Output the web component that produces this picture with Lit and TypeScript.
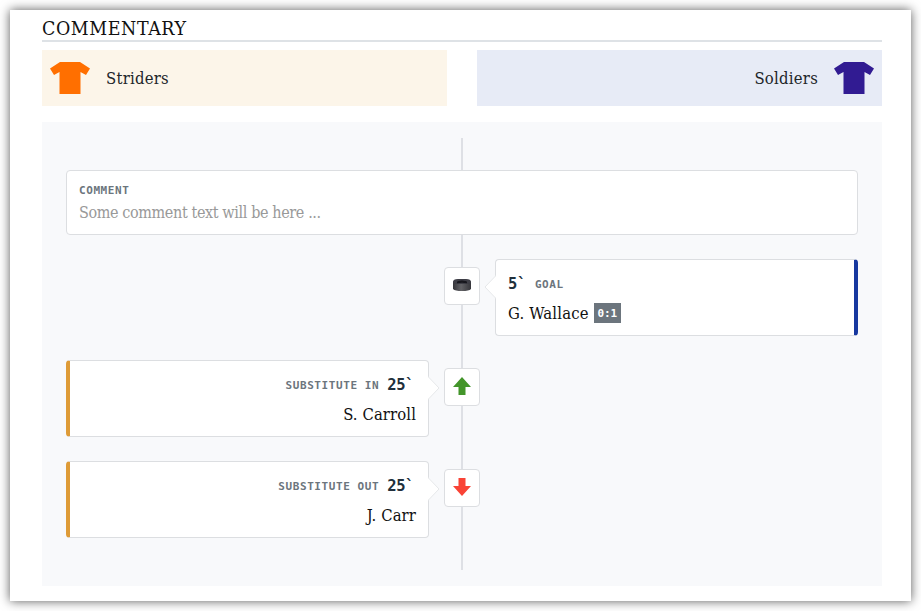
import { LitElement, html, css, svg, nothing } from "lit";
import { customElement, property } from "lit/decorators.js";

type Kind = "goal" | "in" | "out";
interface MatchEvent {
  kind: Kind;
  side: "home" | "away";
  minute: string;
  label: string;
  player: string;
  score?: string;
}

const EVENTS: MatchEvent[] = [
  { kind: "goal", side: "away", minute: "5`", label: "Goal", player: "G. Wallace", score: "0:1" },
  { kind: "in", side: "home", minute: "25`", label: "Substitute in", player: "S. Carroll" },
  { kind: "out", side: "home", minute: "25`", label: "Substitute out", player: "J. Carr" },
];

const GLYPHS = {
  goal: svg`
    <defs><linearGradient id="side" x1="0" x2="1"><stop offset="0" stop-color="#36363b"/><stop offset=".45" stop-color="#626266"/><stop offset="1" stop-color="#36363b"/></linearGradient></defs>
    <path d="M0 2.500V10Q2 12 9 12T18 10V2.500Z" fill="url(#side)"/>
    <path d="M0 3Q0 0 5 0H13Q18 0 18 3Q18 5 14 5H4Q0 5 0 3Z" fill="#3d3d45"/>
    <path d="M4 3Q4.500 1.500 9 1.500T14 3V4.200Q9 3.400 4 4.200Z" fill="#17171d"/>`,
  in: svg`<path d="M9 0L18 10H12.5V18H5.5V10H0Z" fill="#43952a"/>`,
  out: svg`<path d="M9 18L18 8H12.5V0H5.5V8H0Z" fill="#f94336"/>`,
};

@customElement("team-banner")
export class TeamBanner extends LitElement {
  @property() name = "";
  static styles = css`
    :host { display: flex; align-items: center; gap: 16px; height: 56px; padding: 0 8px; box-sizing: border-box; }
    .shirt { width: 40px; height: 32px; flex: none; fill: var(--shirt); }
    .name { font-size: 16.5px; letter-spacing: 0.25px; color: #212529; line-height: 24px; padding-top: 2px; }
  `;
  render() {
    return html`
      <svg class="shirt" viewBox="0 0 40 32"><path d="M10 0H30L40 6.500L36 13L30.500 10V32H9.500V10L4 13L0 6.500Z" /></svg>
      <span class="name">${this.name}</span>`;
  }
}

@customElement("event-row")
export class EventRow extends LitElement {
  @property({ attribute: false }) event!: MatchEvent;
  static styles = css`
    :host { display: grid; grid-template-columns: 363px 66px 363px; height: 77px; }
    .marker {
      grid-column: 2; grid-row: 1; justify-self: center; margin-top: 8px; width: 36px; height: 38px;
      box-sizing: border-box; background: #fff; border: 1px solid #dcdee1; border-radius: 4px;
      display: flex; align-items: center; justify-content: center;
    }
    .glyph { width: 18px; height: 18px; display: block; margin-bottom: 2px; }
    .glyph.goal { height: 12px; margin-bottom: 2px; }
    .card {
      position: relative; grid-row: 1; box-sizing: border-box; background: #fff;
      border: 1px solid #dcdee1; border-radius: 4px; padding: 11px 12px 0;
    }
    .home { grid-column: 1; border-left: 4px solid #de9b37; text-align: right; }
    .away { grid-column: 3; border-right: 4px solid #17389f; }
    .meta { display: flex; align-items: center; gap: 9px; height: 26px; font-family: "DejaVu Sans Mono", monospace; font-weight: 700; }
    .home .meta { flex-direction: row-reverse; gap: 8px; padding-right: 2px; }
    .minute { font-size: 15.5px; letter-spacing: -0.4px; color: #212f3b; }
    .label { font-size: 11px; letter-spacing: 0.58px; color: #6c757d; text-transform: uppercase; }
    .person { display: flex; align-items: center; gap: 5px; height: 24px; margin-top: 4px; font-size: 16.5px; letter-spacing: 0.1px; color: #111; }
    .home .person { justify-content: flex-end; }
    .away .person { letter-spacing: 0.2px; }
    .score {
      background: #6c757d; color: #fff; width: 27px; height: 20px; display: grid; place-items: center;
      font: 700 11px "DejaVu Sans Mono", monospace; letter-spacing: 0;
    }
    .tip { position: absolute; top: 15px; width: 12px; height: 24px; fill: #fff; stroke: #e6e8ea; }
    .home .tip { right: -12px; }
    .away .tip { left: -12px; }
  `;
  render() {
    const e = this.event;
    return html`
      <div class="marker">
        <svg class="glyph ${e.kind}" viewBox=${e.kind === "goal" ? "0 0 18 12" : "0 0 18 18"}>${GLYPHS[e.kind]}</svg>
      </div>
      <div class="card ${e.side}">
        <svg class="tip" viewBox="0 0 12 24"><path d=${e.side === "home" ? "M0 .5L11 12L0 23.5" : "M12 .5L1 12L12 23.5"} /></svg>
        <div class="meta"><span class="minute">${e.minute}</span><span class="label">${e.label}</span></div>
        <div class="person"><span>${e.player}</span>${e.score ? html`<span class="score">${e.score}</span>` : nothing}</div>
      </div>`;
  }
}

@customElement("app-root")
export class AppRoot extends LitElement {
  static styles = css`
    :host { display: block; height: 611px; padding: 10px; box-sizing: border-box; overflow: hidden; background: #fff; font-family: "DejaVu Serif Condensed", "DejaVu Serif", serif; font-stretch: condensed; }
    .frame { height: 591px; box-sizing: border-box; padding: 0 29px 0 32px; background: #fff; box-shadow: 0 0 10px rgba(0, 0, 0, 0.65); }
    .title { margin: 0; height: 32px; box-sizing: border-box; padding-top: 7px; border-bottom: 2px solid #dee2e6; font-size: 19.4px; letter-spacing: 0.6px; line-height: 24px; font-weight: 400; color: #111; white-space: nowrap; }
    .teams { display: grid; grid-template-columns: 1fr 1fr; gap: 30px; margin-top: 8px; }
    .striders { background: #fcf5e9; --shirt: #ff6f00; }
    .soldiers { background: #e7ebf6; --shirt: #311b92; flex-direction: row-reverse; }
    .timeline {
      margin-top: 16px; height: 464px; box-sizing: border-box; padding: 48px 24px 0;
      background: linear-gradient(#dee0e5, #dee0e5) center / 2px 432px no-repeat #f8f9fb;
      display: flex; flex-direction: column; gap: 24px;
    }
    .comment { height: 65px; flex: none; box-sizing: border-box; padding: 13px 12px; border: 1px solid #dcdee1; border-radius: 4px; background: #fff; }
    .caption { font: 700 11px/14px "DejaVu Sans Mono", monospace; letter-spacing: 0.58px; color: #6c757d; text-transform: uppercase; }
    .text { font-size: 16px; letter-spacing: -0.38px; line-height: 24px; margin-top: 3px; color: #999; }
  `;
  render() {
    return html`
      <main class="frame">
        <h1 class="title">COMMENTARY</h1>
        <div class="teams">
          <team-banner class="striders" name="Striders"></team-banner>
          <team-banner class="soldiers" name="Soldiers"></team-banner>
        </div>
        <section class="timeline">
          <article class="comment">
            <div class="caption">Comment</div>
            <div class="text">Some comment text will be here ...</div>
          </article>
          ${EVENTS.map((e) => html`<event-row .event=${e}></event-row>`)}
        </section>
      </main>`;
  }
}
